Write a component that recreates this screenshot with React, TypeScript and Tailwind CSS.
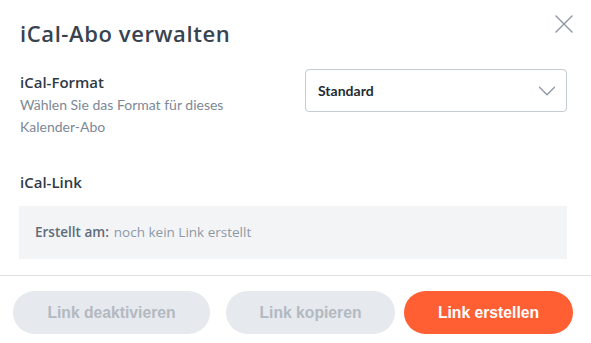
import { ChevronDown } from 'lucide-react';

export default function App() {
  return (
    <div className="w-[591px] h-[343px] bg-white overflow-hidden font-['Lato',sans-serif]">
      <div className="flex items-start justify-between pl-5 pr-[18px] pt-[18px]">
        <h1 className="font-['Open_Sans',sans-serif] text-[22px] leading-[30px] tracking-[0.6px] font-semibold text-[#37434f]">
          iCal-Abo verwalten
        </h1>
        <button className="mt-[-3px] text-[#8c97a3]">
          <svg width="18" height="18" viewBox="0 0 18 18" fill="none" stroke="currentColor" strokeWidth="1.4" strokeLinecap="round">
            <path d="M1 1 17 17M17 1 1 17" />
          </svg>
        </button>
      </div>

      <div className="flex justify-between pl-5 pr-6 mt-[24px]">
        <div className="w-[250px]">
          <div className="font-['Open_Sans',sans-serif] text-[15px] leading-[20px] font-semibold text-[#2e3a45]">iCal-Format</div>
          <p className="mt-[2px] text-[14px] leading-[22px] text-[#7d8896]">
            Wählen Sie das Format für dieses Kalender-Abo
          </p>
        </div>
        <div className="w-[262px] h-[43px] mt-[-3px] border border-[#c4cbd3] rounded-[4px] flex items-center justify-between pl-3 pr-1">
          <span className="text-[14px] font-bold text-[#252b31]">Standard</span>
          <ChevronDown size={30} strokeWidth={1.05} className="text-[#8c97a3]" />
        </div>
      </div>

      <div className="pl-5 mt-[34px] font-['Open_Sans',sans-serif] text-[15px] leading-[20px] font-semibold text-[#2e3a45]">
        iCal-Link
      </div>

      <div className="ml-[19px] mr-6 mt-[14px] h-[53px] bg-[#f3f4f6] flex items-center pl-4 font-['Open_Sans',sans-serif] text-[13.5px]">
        <span className="font-semibold text-[#5f6b78]">Erstellt am:</span>
        <span className="ml-[5px] font-medium text-[#8d99a6]">noch kein Link erstellt</span>
      </div>

      <div className="mt-[16px] border-t border-[#dfe2e7] flex pl-[13px] pt-[15px] font-['Liberation_Sans',sans-serif] text-[15.7px] font-bold">
        <button className="w-[197px] h-[43px] rounded-full bg-[#e6e9ed] text-[#b3b9c1]">Link deaktivieren</button>
        <button className="ml-4 w-[169px] h-[43px] rounded-full bg-[#e6e9ed] text-[#b3b9c1]">Link kopieren</button>
        <button className="ml-[9px] w-[169px] h-[43px] rounded-full bg-[#ff5f33] text-white">Link erstellen</button>
      </div>
    </div>
  );
}
